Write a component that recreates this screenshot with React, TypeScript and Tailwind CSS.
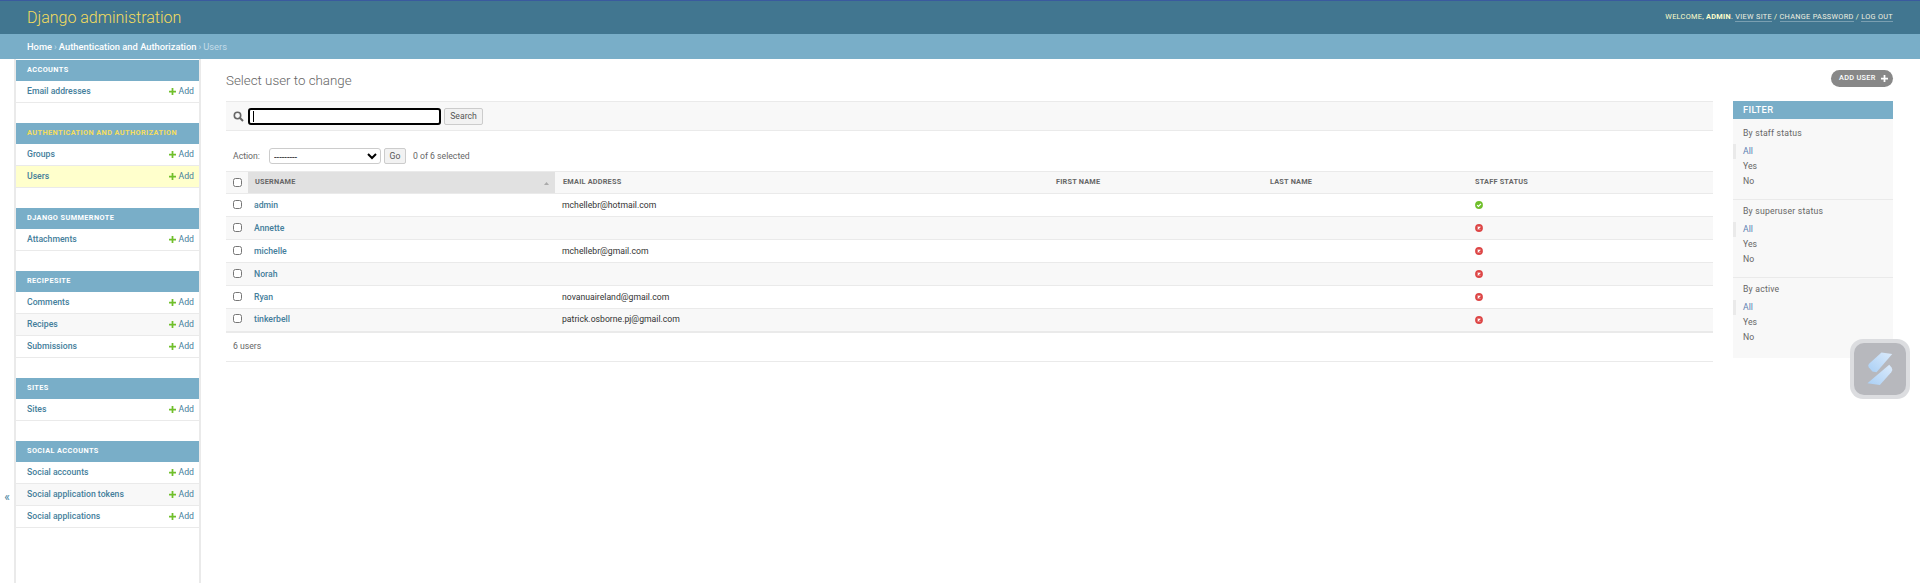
const apps = [
  { name: "Accounts", rows: ["Email addresses"] },
  { name: "Authentication and Authorization", rows: ["Groups", "Users"], current: true },
  { name: "Django Summernote", rows: ["Attachments"] },
  { name: "Recipesite", rows: ["Comments", "Recipes", "Submissions"] },
  { name: "Sites", rows: ["Sites"] },
  { name: "Social Accounts", rows: ["Social accounts", "Social application tokens", "Social applications"] },
];

const users = [
  { name: "admin", email: "mchellebr@hotmail.com", staff: true },
  { name: "Annette", email: "", staff: false },
  { name: "michelle", email: "mchellebr@gmail.com", staff: false },
  { name: "Norah", email: "", staff: false },
  { name: "Ryan", email: "novanuaireland@gmail.com", staff: false },
  { name: "tinkerbell", email: "patrick.osborne.pj@gmail.com", staff: false },
];

const filters = ["By staff status", "By superuser status", "By active"];

function AddIcon() {
  return (
    <svg width="7" height="7" viewBox="0 0 8 8" className="mr-[3px]">
      <path d="M3 0h2v3h3v2H5v3H3V5H0V3h3z" fill="#70bf2b" />
    </svg>
  );
}

function StatusIcon({ yes }: { yes: boolean }) {
  return yes ? (
    <svg width="8" height="8" viewBox="0 0 9 9">
      <circle cx="4.5" cy="4.5" r="4.4" fill="#70bf2b" />
      <path d="M2.4 4.6l1.5 1.5 2.8-2.8" stroke="#fff" strokeWidth="1.4" fill="none" />
    </svg>
  ) : (
    <svg width="8" height="8" viewBox="0 0 9 9">
      <circle cx="4.5" cy="4.5" r="4.4" fill="#dd4646" />
      <path d="M3 3l3 3M6 3l-3 3" stroke="#fff" strokeWidth="1.3" fill="none" />
    </svg>
  );
}

function Sidebar() {
  return (
    <nav className="w-[187px] shrink-0 border-l-2 border-r-2 border-[#eaeaea] pt-px">
      {apps.map((app) => (
        <div key={app.name} className="mb-5">
          <div
            className={`h-[21px] bg-[#79aec8] pl-[11px] flex items-center whitespace-nowrap text-[7.33px] font-bold uppercase tracking-[0.4px] ${
              app.current ? "text-[#f5dd5d]" : "text-white"
            }`}
          >
            {app.name}
          </div>
          {app.rows.map((row, i) => (
            <div
              key={row}
              className={`h-[22px] border-b border-[#eaeaea] pl-[11px] pr-[5px] flex items-center justify-between text-[8.67px] ${
                row === "Users" ? "bg-[#ffffcc]" : i % 2 === 1 ? "bg-[#f8f8f8]" : "bg-white"
              }`}
            >
              <span className="font-medium text-[#447e9b]">{row}</span>
              <span className="flex items-center text-[#447e9b]">
                <AddIcon />
                Add
              </span>
            </div>
          ))}
        </div>
      ))}
    </nav>
  );
}

function ChangeTable() {
  return (
    <table className="w-full table-fixed border-collapse text-[8.67px]">
      <colgroup>
        <col className="w-[22px]" />
        <col className="w-[307px]" />
        <col className="w-[494px]" />
        <col className="w-[214px]" />
        <col className="w-[205px]" />
        <col />
      </colgroup>
      <thead>
        <tr className="h-[22px] bg-[#f8f8f8] border-t border-b border-[#eaeaea] text-[7.33px] font-bold uppercase tracking-[0.2px] text-[#666] text-left">
          <th className="pl-[7px]">
            <input type="checkbox" className="block w-[9px] h-[9px] -mt-px" />
          </th>
          <th className="bg-[#e1e1e1] pl-[7px] relative">
            Username
            <svg width="5" height="3" viewBox="0 0 5 3" className="absolute right-[6px] top-[10px]">
              <path d="M2.5 0L5 3H0z" fill="#aaa" />
            </svg>
          </th>
          <th className="pl-[8px]">Email address</th>
          <th className="pl-[7px]">First name</th>
          <th className="pl-[7px]">Last name</th>
          <th className="pl-[7px]">Staff status</th>
        </tr>
      </thead>
      <tbody>
        {users.map((u, i) => (
          <tr
            key={u.name}
            className={`h-[23px] border-[#eaeaea] ${i === users.length - 1 ? "border-b-2" : "border-b"} ${
              i % 2 === 1 ? "bg-[#f8f8f8]" : "bg-white"
            }`}
          >
            <td className="pl-[7px]">
              <input type="checkbox" className="block w-[9px] h-[9px] -mt-[2px]" />
            </td>
            <td className="pl-[6px] font-medium text-[#447e9b]">{u.name}</td>
            <td className="pl-[7px] text-[#333]">{u.email}</td>
            <td />
            <td />
            <td className="pl-[7px]">
              <StatusIcon yes={u.staff} />
            </td>
          </tr>
        ))}
      </tbody>
    </table>
  );
}

function FilterPanel() {
  return (
    <aside className="w-40 shrink-0 h-[257px] bg-[#f8f8f8] text-[8.67px] text-[#666]">
      <div className="h-[18px] bg-[#79aec8] pl-[10px] flex items-center text-[9.33px] font-medium tracking-[0.3px] text-white">
        FILTER
      </div>
      <div className="pt-[2.5px]">
        {filters.map((title, i) => (
          <div key={title} className={`h-[78px] pt-[4px] ${i < 2 ? "border-b border-[#eaeaea]" : ""}`}>
            <div className="pl-[10px] h-[14px] leading-[14px] tracking-[0.2px]">{title}</div>
            <ul className="mt-[4.5px] leading-[15px]">
              <li className="border-l-[3px] border-[#eaeaea] pl-[7px] text-[#5b80b2]">All</li>
              <li className="pl-[10px]">Yes</li>
              <li className="pl-[10px]">No</li>
            </ul>
          </div>
        ))}
      </div>
    </aside>
  );
}

export default function App() {
  return (
    <div className="h-[583px] overflow-hidden bg-white font-['Roboto',sans-serif] relative flex flex-col">
      <header className="h-[34px] shrink-0 bg-[#417690] border-t border-[#3a5a9e] flex items-center justify-between pl-[27px] pr-[27px]">
        <h1 className="text-[16px] font-light text-[#f5dd5d]">Django administration</h1>
        <div className="text-[7.33px] uppercase tracking-[0.3px] text-[#ffc]">
          Welcome, <strong className="font-bold">admin</strong>. <span className="text-[#f0f0e0] border-b border-white/30">View site</span> /{" "}
          <span className="text-[#f0f0e0] border-b border-white/30">Change password</span> /{" "}
          <span className="text-[#f0f0e0] border-b border-white/30">Log out</span>
        </div>
      </header>
      <div className="h-[25px] shrink-0 bg-[#79aec8] pl-[27px] flex items-center text-[9.33px] text-white">
        <span className="font-medium">Home</span>
        <span className="mx-[2px] text-[#c4dce8]">›</span>
        <span className="font-medium">Authentication and Authorization</span>
        <span className="mx-[2px] text-[#c4dce8]">›</span>
        <span className="text-[#c4dce8]">Users</span>
      </div>

      <div className="flex-1 flex min-h-0">
        <div className="w-[14px] shrink-0 pt-[431px] text-center text-[12px] leading-[14px] text-[#447e9b]">«</div>
        <Sidebar />
        <main className="flex-1 min-w-0 pl-[25px] pr-[27px]">
          <div className="h-[42px] flex items-start justify-between">
            <h2 className="mt-[12px] text-[13.33px] font-light text-[#666]">Select user to change</h2>
            <button className="mt-[11px] h-[17px] w-[62px] rounded-full bg-[#888] flex items-center justify-between pl-2 pr-[5px] whitespace-nowrap text-[7.33px] font-medium tracking-[0.3px] text-white">
              ADD USER
              <svg width="7" height="7" viewBox="0 0 8 8">
                <path d="M3 0h2v3h3v2H5v3H3V5H0V3h3z" fill="#fff" />
              </svg>
            </button>
          </div>
          <div className="flex gap-5">
            <div className="flex-1 min-w-0">
              <div className="h-[30px] bg-[#f8f8f8] border-t border-b border-[#eaeaea] flex items-center pl-[7px]">
                <svg width="11" height="11" viewBox="0 0 11 11" className="mr-[4px]">
                  <circle cx="4.5" cy="4.5" r="3.2" stroke="#666" strokeWidth="1.6" fill="none" />
                  <path d="M7 7l3 3" stroke="#666" strokeWidth="2" />
                </svg>
                <div className="relative">
                  <input className="block w-[193px] h-[17px] rounded-[3px] border-2 border-black bg-white outline-none" />
                  <span className="absolute left-[5px] top-[3px] w-px h-[11px] bg-black" />
                </div>
                <button className="ml-[3px] h-[17px] w-[39px] rounded-[2px] border border-[#ccc] bg-[#f2f2f2] text-[8.67px] text-[#555]">
                  Search
                </button>
              </div>
              <div className="h-[40px] pt-[10px] flex items-center pl-[7px] text-[8.67px] text-[#666]">
                <span className="w-[27px]">Action:</span>
                <select className="ml-[9px] w-[112px] h-[16px] rounded-[3px] border border-[#ccc] bg-white text-[9.33px] text-black">
                  <option>---------</option>
                </select>
                <button className="ml-[3px] h-[16px] w-[22px] rounded-[2px] border border-[#ccc] bg-[#f2f2f2] text-[#555]">Go</button>
                <span className="ml-[7px]">0 of 6 selected</span>
              </div>
              <ChangeTable />
              <div className="h-[29px] border-b border-[#eaeaea] pl-[7px] flex items-center text-[8.67px] text-[#666]">6 users</div>
            </div>
            <FilterPanel />
          </div>
        </main>
      </div>

      <div className="absolute left-[1850px] top-[339px] w-[60px] h-[60px] rounded-[13px] bg-[#dcdde0] p-1">
        <div className="w-full h-full rounded-[10px] bg-[#b7b8bd]">
          <svg width="52" height="52" viewBox="13 13 155 155">
            <defs>
              <linearGradient id="logoFill" x1="0" y1="1" x2="1" y2="0">
                <stop offset="0" stopColor="#a9cff5" />
                <stop offset="1" stopColor="#dcebfb" />
              </linearGradient>
            </defs>
            <path d="M95 41L127 46 80 100 68 98 57 85Q53 80 58 75z" fill="url(#logoFill)" />
            <path d="M118 78L125 86Q130 93 124 100L90 138 53 133z" fill="url(#logoFill)" />
          </svg>
        </div>
      </div>
    </div>
  );
}
